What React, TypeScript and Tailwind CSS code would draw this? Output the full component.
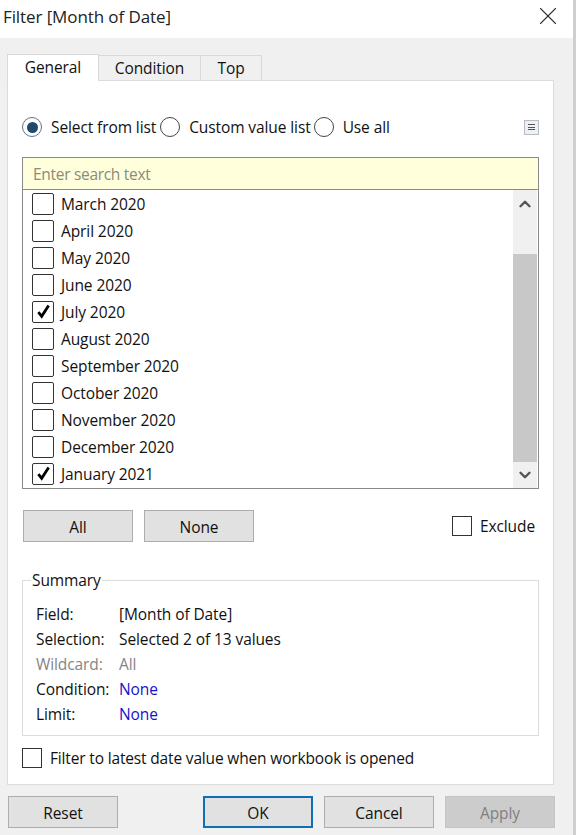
import { X, ChevronUp, ChevronDown } from "lucide-react"

const months = [
  { label: "March 2020", checked: false },
  { label: "April 2020", checked: false },
  { label: "May 2020", checked: false },
  { label: "June 2020", checked: false },
  { label: "July 2020", checked: true },
  { label: "August 2020", checked: false },
  { label: "September 2020", checked: false },
  { label: "October 2020", checked: false },
  { label: "November 2020", checked: false },
  { label: "December 2020", checked: false },
  { label: "January 2021", checked: true },
]

const summary = [
  { name: "Field:", value: "[Month of Date]", nameClass: "text-[#111]", valueClass: "text-[#111]" },
  { name: "Selection:", value: "Selected 2 of 13 values", nameClass: "text-[#111]", valueClass: "text-[#111]" },
  { name: "Wildcard:", value: "All", nameClass: "text-[#858585]", valueClass: "text-[#858585]" },
  { name: "Condition:", value: "None", nameClass: "text-[#111]", valueClass: "text-[#1414c8]" },
  { name: "Limit:", value: "None", nameClass: "text-[#111]", valueClass: "text-[#1414c8]" },
]

function Radio({ selected, label, className }: { selected?: boolean; label: string; className: string }) {
  return (
    <div className="flex items-center">
      <div
        className={
          "flex h-[20px] w-[20px] items-center justify-center rounded-full border " +
          (selected ? "border-[#5a7690]" : "border-[#444]")
        }
      >
        {selected && <div className="h-[11px] w-[11px] rounded-full bg-[#234a6b]" />}
      </div>
      <span className={className}>{label}</span>
    </div>
  )
}

function Btn({ label, className = "border border-[#adadad] bg-[#e1e1e1] text-[#111]" }: { label: string; className?: string }) {
  return (
    <button className={"flex h-[32px] w-[110px] items-center justify-center pt-px " + className}>
      {label}
    </button>
  )
}

export default function App() {
  return (
    <div className="flex h-[835px] w-[576px] flex-col overflow-hidden border-r-[3px] border-[#cfcfcf] bg-[#f0f0f0] font-['Open_Sans','Noto_Sans',sans-serif] text-[15.5px] leading-[20px] tracking-[-0.1px] text-[#111]">
      {/* Title bar */}
      <div className="flex h-[38px] shrink-0 items-center justify-between bg-white pb-[4px] pl-[3px] pr-[10px]">
        <span className="text-[17px] text-[#222]">Filter [Month of Date]</span>
        <X className="-mt-[3px] h-[30px] w-[30px] text-[#333]" strokeWidth={0.9} />
      </div>

      {/* Tabs */}
      <div className="flex h-[42px] shrink-0 items-end pl-[7px]">
        <div className="z-10 -mb-px flex h-[27px] w-[92px] items-center justify-center border border-b-0 border-[#d9d9d9] bg-white pb-[3px]">
          General
        </div>
        <div className="flex h-[25px] w-[102px] items-center justify-center border-t border-r border-[#d9d9d9]">
          Condition
        </div>
        <div className="flex h-[25px] w-[61px] items-center justify-center border-t border-r border-[#d9d9d9]">
          Top
        </div>
      </div>

      {/* Panel */}
      <div className="ml-[7px] flex h-[705px] w-[547px] shrink-0 flex-col border border-[#dcdcdc] bg-white px-[14px]">
        <div className="mt-[36px] flex h-[20px] items-center justify-between pr-[1px]">
          <div className="flex items-center">
            <Radio selected label="Select from list" className="ml-[9px] mr-[4px]" />
            <Radio label="Custom value list" className="ml-[9px] mr-[3px]" />
            <Radio label="Use all" className="ml-[9px]" />
          </div>
          <div className="mr-[-1px] flex h-[15px] w-[15px] flex-col items-center justify-center gap-[1.5px] border border-[#b5bcc6] bg-[#eef0f3]">
            <div className="h-px w-[7px] bg-[#555]" />
            <div className="h-px w-[7px] bg-[#555]" />
            <div className="h-px w-[7px] bg-[#555]" />
          </div>
        </div>

        {/* Search and list */}
        <div className="mt-[20px] w-[517px] border border-[#8a8a8a]">
          <div className="flex h-[32px] items-center border-b border-[#8a8a8a] bg-[#ffffdc] pl-[10px] tracking-[-0.3px] text-[#8b8b78]">
            Enter search text
          </div>
          <div className="flex h-[298px]">
            <div className="flex-1 pl-[9px]">
              {months.map((m) => (
                <div key={m.label} className="flex h-[27px] items-center">
                  <div className="flex h-[22px] w-[22px] items-center justify-center rounded-[2px] border border-[#333]">
                    {m.checked && (
                      <svg viewBox="0 0 14 14" className="h-[15px] w-[15px]" fill="none" stroke="#000" strokeWidth="2.6">
                        <path d="M2.2 7.5 L5.3 11.5 L11.8 1.5" />
                      </svg>
                    )}
                  </div>
                  <span className="ml-[7px]">{m.label}</span>
                </div>
              ))}
            </div>
            <div className="mr-px flex w-[24px] flex-col items-center bg-[#f0f0f0]">
              <div className="flex h-[64px] w-full items-start justify-center pt-[5px]">
                <ChevronUp className="h-[18px] w-[18px] text-[#555]" strokeWidth={3.2} />
              </div>
              <div className="h-[208px] w-full bg-[#c8c8c8]" />
              <div className="flex flex-1 items-center justify-center">
                <ChevronDown className="h-[18px] w-[18px] text-[#555]" strokeWidth={3.2} />
              </div>
            </div>
          </div>
        </div>

        {/* All / None / Exclude */}
        <div className="mt-[21px] flex items-center justify-between">
          <div className="ml-px flex gap-[11px]">
            <Btn label="All" />
            <Btn label="None" />
          </div>
          <div className="mr-[4px] flex items-center">
            <div className="h-[20px] w-[20px] border border-[#333]" />
            <span className="ml-[8px]">Exclude</span>
          </div>
        </div>

        {/* Summary */}
        <fieldset className="mt-[28px] h-[166px] w-[517px] border border-[#dcdcdc] pl-[13px]">
          <legend className="-ml-[5px] px-px">Summary</legend>
          <div className="mt-[11px] flex flex-col">
            {summary.map((s) => (
              <div key={s.name} className="flex h-[25px] items-center">
                <span className={"w-[83px] " + s.nameClass}>{s.name}</span>
                <span className={s.valueClass}>{s.value}</span>
              </div>
            ))}
          </div>
        </fieldset>

        <div className="mt-[11px] flex items-center">
          <div className="h-[20px] w-[20px] border border-[#333]" />
          <span className="ml-[8px] pt-px tracking-[-0.16px]">Filter to latest date value when workbook is opened</span>
        </div>
      </div>

      {/* Footer */}
      <div className="mt-[11px] flex pl-[8px]">
        <Btn label="Reset" />
        <div className="ml-[85px]">
          <Btn label="OK" className="border-2 border-[#0f6fb5] bg-[#e1e1e1] text-[#111]" />
        </div>
        <div className="ml-[11px]">
          <Btn label="Cancel" />
        </div>
        <div className="ml-[11px]">
          <Btn label="Apply" className="border border-[#c4c4c4] bg-[#cccccc] text-[#808080]" />
        </div>
      </div>
    </div>
  )
}
